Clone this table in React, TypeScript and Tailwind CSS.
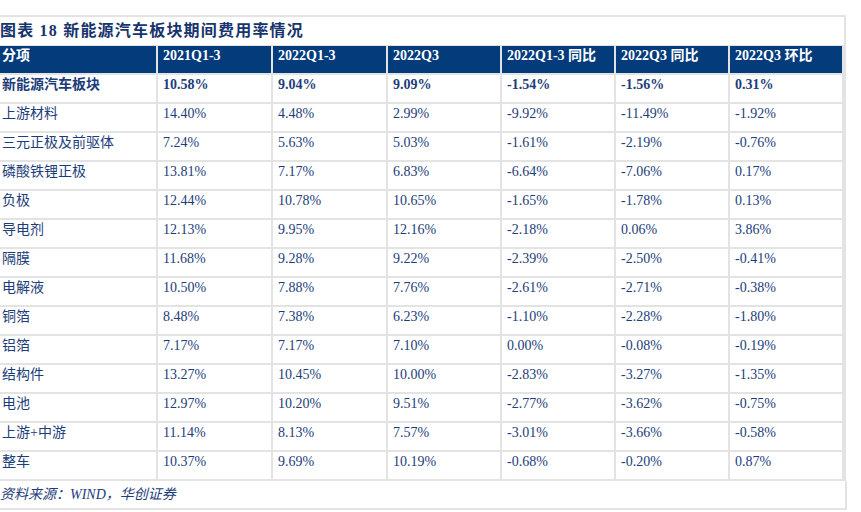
const headers = ['分项', '2021Q1-3', '2022Q1-3', '2022Q3', '2022Q1-3 同比', '2022Q3 同比', '2022Q3 环比'];

const rows: string[][] = [
  ['新能源汽车板块', '10.58%', '9.04%', '9.09%', '-1.54%', '-1.56%', '0.31%'],
  ['上游材料', '14.40%', '4.48%', '2.99%', '-9.92%', '-11.49%', '-1.92%'],
  ['三元正极及前驱体', '7.24%', '5.63%', '5.03%', '-1.61%', '-2.19%', '-0.76%'],
  ['磷酸铁锂正极', '13.81%', '7.17%', '6.83%', '-6.64%', '-7.06%', '0.17%'],
  ['负极', '12.44%', '10.78%', '10.65%', '-1.65%', '-1.78%', '0.13%'],
  ['导电剂', '12.13%', '9.95%', '12.16%', '-2.18%', '0.06%', '3.86%'],
  ['隔膜', '11.68%', '9.28%', '9.22%', '-2.39%', '-2.50%', '-0.41%'],
  ['电解液', '10.50%', '7.88%', '7.76%', '-2.61%', '-2.71%', '-0.38%'],
  ['铜箔', '8.48%', '7.38%', '6.23%', '-1.10%', '-2.28%', '-1.80%'],
  ['铝箔', '7.17%', '7.17%', '7.10%', '0.00%', '-0.08%', '-0.19%'],
  ['结构件', '13.27%', '10.45%', '10.00%', '-2.83%', '-3.27%', '-1.35%'],
  ['电池', '12.97%', '10.20%', '9.51%', '-2.77%', '-3.62%', '-0.75%'],
  ['上游+中游', '11.14%', '8.13%', '7.57%', '-3.01%', '-3.66%', '-0.58%'],
  ['整车', '10.37%', '9.69%', '10.19%', '-0.68%', '-0.20%', '0.87%'],
];

const font = { fontFamily: '"Liberation Serif", "Noto Sans CJK SC", serif' };

export default function App() {
  return (
    <div className="w-[861px] h-[512px] bg-white pt-[15px] overflow-hidden" style={font}>
      {/* 标题 */}
      <div className="w-[846px] h-[30px] border-t-2 border-r-2 border-[#e3e3e3] flex items-center">
        <span className="text-[16px] font-bold tracking-[1.2px] text-[#17346e] leading-none">
          图表 18 新能源汽车板块期间费用率情况
        </span>
      </div>

      {/* 表格 */}
      <div className="w-[846px] bg-[#e3e3e3] pt-[1px] pr-[2px] pb-[2px] grid grid-cols-[156px_113px_113px_112px_112px_112px_112px] gap-[2px]">
        {headers.map((h, i) => (
          <div
            key={h}
            className={`h-[27px] bg-[#033b7b] text-white font-bold text-[14px] leading-[18px] pt-[1px] ${i === 0 ? 'pl-[2px]' : 'pl-[5px]'}`}
          >
            {h}
          </div>
        ))}
        {rows.map((r, ri) =>
          r.map((c, ci) => (
            <div
              key={ri + '-' + ci}
              className={`h-[27px] bg-white text-[#1c3d7a] text-[14px] leading-[18px] pt-[1px] ${ci === 0 ? 'pl-[2px]' : 'pl-[5px]'} ${ri === 0 ? 'font-bold' : ''}`}
            >
              {c}
            </div>
          ))
        )}
      </div>

      {/* 资料来源 */}
      <div className="w-[847px] h-[29px] border-r-2 border-b-2 border-[#e3e3e3] flex items-center">
        <span className="italic text-[14px] text-[#1c3d7a] leading-none">资料来源：WIND，华创证券</span>
      </div>
    </div>
  );
}
